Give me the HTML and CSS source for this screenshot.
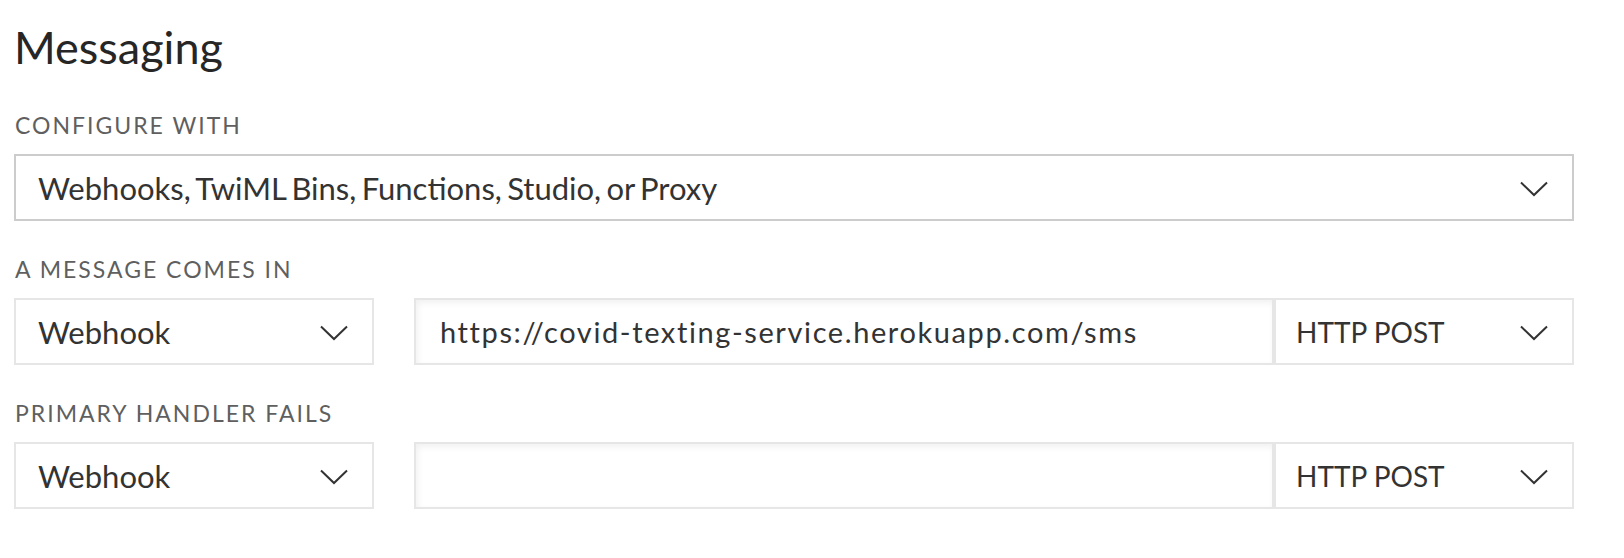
FILE: index.html
```html
<!DOCTYPE html>
<html lang="en">
<head>
<meta charset="utf-8">
<title>Messaging</title>
<link rel="stylesheet" href="styles.css">
</head>
<body>
<main class="page">
  <h1 class="title">Messaging</h1>

  <section class="field">
    <div class="label">CONFIGURE WITH</div>
    <div class="select select-strong">
      <span class="value wide">Webhooks, TwiML Bins, Functions, Studio, or Proxy</span>
      <svg class="chev" width="28" height="16" viewBox="0 0 28 16"><path d="M1 1.5 L14 14 L27 1.5" fill="none" stroke="#333" stroke-width="2"/></svg>
    </div>
  </section>

  <section class="field">
    <div class="label">A MESSAGE COMES IN</div>
    <div class="row">
      <div class="select type">
        <span class="value">Webhook</span>
        <svg class="chev" width="28" height="16" viewBox="0 0 28 16"><path d="M1 1.5 L14 14 L27 1.5" fill="none" stroke="#333" stroke-width="2"/></svg>
      </div>
      <div class="input">https://covid-texting-service.herokuapp.com/sms</div>
      <div class="select method">
        <span class="value">HTTP POST</span>
        <svg class="chev" width="28" height="16" viewBox="0 0 28 16"><path d="M1 1.5 L14 14 L27 1.5" fill="none" stroke="#333" stroke-width="2"/></svg>
      </div>
    </div>
  </section>

  <section class="field">
    <div class="label">PRIMARY HANDLER FAILS</div>
    <div class="row">
      <div class="select type">
        <span class="value">Webhook</span>
        <svg class="chev" width="28" height="16" viewBox="0 0 28 16"><path d="M1 1.5 L14 14 L27 1.5" fill="none" stroke="#333" stroke-width="2"/></svg>
      </div>
      <div class="input"></div>
      <div class="select method">
        <span class="value">HTTP POST</span>
        <svg class="chev" width="28" height="16" viewBox="0 0 28 16"><path d="M1 1.5 L14 14 L27 1.5" fill="none" stroke="#333" stroke-width="2"/></svg>
      </div>
    </div>
  </section>
</main>
</body>
</html>
```
FILE: styles.css
```css
* { box-sizing: border-box; }

html, body {
  margin: 0;
  background: #fff;
}

body {
  font-family: Lato, "Open Sans", "Liberation Sans", sans-serif;
  color: #333;
}

.page {
  width: 1588px;
  padding: 21px 14px 0 14px;
}

.title {
  margin: 0 0 38px 0;
  font-size: 45px;
  line-height: 52px;
  font-weight: 400;
  color: #262626;
}

.field {
  margin-bottom: 34px;
}

.label {
  font-size: 23px;
  line-height: 28px;
  letter-spacing: 2px;
  color: #5f5f5f;
  padding-left: 1px;
  margin-bottom: 15px;
}

.row {
  display: flex;
}

.select,
.input {
  height: 67px;
  display: flex;
  align-items: center;
  border: 2px solid #e6e6e6;
  font-size: 31px;
  color: #333;
  background: #fff;
}

.select {
  justify-content: space-between;
  padding: 0 24px 0 22px;
}

.select-strong {
  border-color: #cccccc;
}

.wide {
  word-spacing: -2.6px;
}

.chev {
  display: block;
  margin-top: 3px;
  flex: none;
}

.type {
  width: 360px;
  margin-right: 40px;
}

.input {
  width: 860px;
  padding-left: 24px;
  font-size: 29px;
  letter-spacing: 1.6px;
  box-shadow: inset 2px 3px 6px rgba(0, 0, 0, 0.06);
}

.method {
  width: 300px;
  padding-left: 20px;
  font-size: 28px;
}
```
